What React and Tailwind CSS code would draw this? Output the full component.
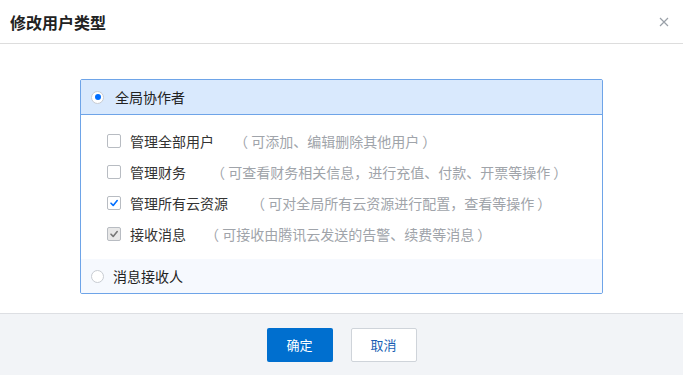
import React from "react";

const Check = ({ color }) => (
  <svg width="10" height="10" viewBox="0 0 10 10">
    <path d="M2 5.2 L4.2 7.4 L8.2 2.6" fill="none" stroke={color} strokeWidth="1.6" strokeLinecap="round" strokeLinejoin="round" />
  </svg>
);

const rows = [
  { label: "管理全部用户", desc: "（ 可添加、编辑删除其他用户 ）", state: "off", ml: "ml-[20px]" },
  { label: "管理财务", desc: "（ 可查看财务相关信息，进行充值、付款、开票等操作 ）", state: "off", ml: "ml-[25px]" },
  { label: "管理所有云资源", desc: "（ 可对全局所有云资源进行配置，查看等操作 ）", state: "on", ml: "ml-[23px]" },
  { label: "接收消息", desc: "（ 可接收由腾讯云发送的告警、续费等消息 ）", state: "disabled", ml: "ml-[19px]" },
];

export default function App() {
  return (
    <div
      className="w-[683px] h-[375px] bg-white flex flex-col text-[#333]"
      style={{ fontFamily: '"Noto Sans CJK SC", "Noto Sans", sans-serif' }}
    >
      <div className="h-[44px] flex items-center justify-between pl-[10px] pr-[14px] border-b border-[#dddddd]">
        <div className="text-[16px] font-bold text-[#222]">修改用户类型</div>
        <svg width="10" height="10" viewBox="0 0 10 10">
          <path d="M1 1 L9 9 M9 1 L1 9" stroke="#9aa0a8" strokeWidth="1.2" />
        </svg>
      </div>
      <div className="flex-1 pt-[35px] px-[80px]">
        <div className="w-[523px] border border-[#6ea4e8] rounded-[2px] overflow-hidden">
          <div className="h-[35px] bg-[#d9e9fd] border-b border-[#6ea4e8] flex items-center pl-[10px]">
            <span className="w-[13px] h-[13px] rounded-full border border-[#c8ccd2] bg-white flex items-center justify-center">
              <span className="w-[6px] h-[6px] rounded-full bg-[#006eff]" />
            </span>
            <span className="ml-[11px] text-[14px] text-[#222] leading-none">全局协作者</span>
          </div>
          <div className="bg-white py-[10px] pl-[26px]">
            {rows.map((r) => (
              <div key={r.label} className="h-[31px] flex items-center text-[14px] leading-none">
                {r.state === "off" && (
                  <span className="w-[14px] h-[14px] border border-[#b8bcc2] rounded-[2px] bg-white" />
                )}
                {r.state === "on" && (
                  <span className="w-[14px] h-[14px] border border-[#b8bcc2] rounded-[2px] bg-white flex items-center justify-center">
                    <Check color="#006eff" />
                  </span>
                )}
                {r.state === "disabled" && (
                  <span className="w-[14px] h-[14px] border border-[#b8bcc2] rounded-[2px] bg-[#e8e8e8] flex items-center justify-center">
                    <Check color="#777" />
                  </span>
                )}
                <span className="ml-[9px] text-[#333]">{r.label}</span>
                <span className={`${r.ml} text-[#a0a4aa] whitespace-pre`}>{r.desc}</span>
              </div>
            ))}
          </div>
          <div className="h-[34px] bg-[#f6f9fe] flex items-center pl-[10px]">
            <span className="w-[13px] h-[13px] rounded-full border border-[#c8ccd2] bg-white" />
            <span className="ml-[9px] text-[14px] text-[#222] leading-none">消息接收人</span>
          </div>
        </div>
      </div>
      <div className="h-[62px] bg-[#f2f4f7] border-t border-[#dddfe3] flex items-center justify-center gap-[18px] pt-[1px]">
        <button className="w-[66px] h-[34px] bg-[#006fcf] rounded-[2px] text-white text-[13px]">确定</button>
        <button className="w-[66px] h-[34px] bg-white border border-[#cfd4da] rounded-[2px] text-[#1a5fb4] text-[13px]">取消</button>
      </div>
    </div>
  );
}
